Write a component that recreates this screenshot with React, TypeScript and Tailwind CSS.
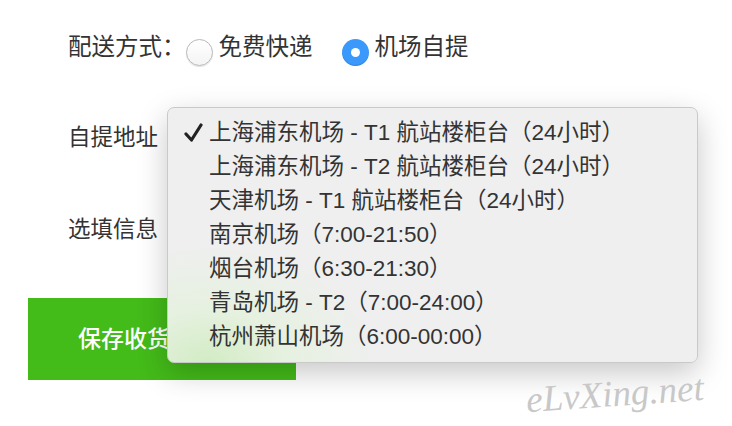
import { useState } from 'react';

const airports = [
  '上海浦东机场 - T1 航站楼柜台（24小时）',
  '上海浦东机场 - T2 航站楼柜台（24小时）',
  '天津机场 - T1 航站楼柜台（24小时）',
  '南京机场（7:00-21:50）',
  '烟台机场（6:30-21:30）',
  '青岛机场 - T2（7:00-24:00）',
  '杭州萧山机场（6:00-00:00）',
];

const Radio = ({ checked, onClick }: { checked: boolean; onClick: () => void }) => (
  <span
    onClick={onClick}
    className={`mt-[6px] flex h-[27px] w-[27px] shrink-0 items-center justify-center rounded-full ${
      checked
        ? 'bg-[#3b99fc] shadow-[inset_0_-1px_1px_rgba(0,0,0,0.15)]'
        : 'border border-[#b8b8b8] bg-gradient-to-b from-white to-[#f4f4f4] shadow-[0_1px_1px_rgba(0,0,0,0.12)]'
    }`}
  >
    {checked && <span className="h-[9px] w-[9px] rounded-full bg-white" />}
  </span>
);

export default function App() {
  const [mode, setMode] = useState('pickup');
  const [selected] = useState(0);

  return (
    <div className="relative h-[426px] w-[732px] overflow-hidden bg-white font-['Liberation_Sans','Noto_Sans_CJK_SC',sans-serif] text-[#333]">
      <div className="flex flex-col pt-[33px]">
        <div className="flex h-[28px] items-start pl-[68px] text-[23.5px] leading-[28px]">
          <span>配送方式：</span>
          <Radio checked={mode === 'express'} onClick={() => setMode('express')} />
          <span className="ml-[6px]">免费快递</span>
          <span className="ml-[29px]">
            <Radio checked={mode === 'pickup'} onClick={() => setMode('pickup')} />
          </span>
          <span className="ml-[6px]">机场自提</span>
        </div>

        <div className="mt-[63px] pl-[68px] text-[22.5px] leading-[28px]">自提地址</div>
        <div className="mt-[64px] pl-[68px] text-[22.5px] leading-[28px]">选填信息</div>

        <button className="ml-[28px] mt-[54px] flex h-[82px] w-[268px] items-center bg-[#43bb19] pl-[50px] text-[23px] font-medium text-white">
          保存收货地址
        </button>
      </div>

      {/* native select popup */}
      <div className="absolute left-[167px] top-[107px] w-[531px] rounded-[7px] border border-[#c9c9c9] bg-[radial-gradient(ellipse_170px_120px_at_40px_255px,#d2ecc4_0%,#e6f1e0_45%,#efefef_100%)] py-[8px] shadow-[0_10px_30px_rgba(0,0,0,0.22)]">
        {airports.map((a, i) => (
          <div key={a} className="flex h-[34px] items-center text-[22.5px] text-[#333]">
            <span className="flex w-[41px] justify-center pl-[10px]">
              {i === selected && (
                <svg width="19" height="20" viewBox="0 0 19 20">
                  <path d="M2 11 L7.5 17 L17 2" fill="none" stroke="#222" strokeWidth="3.2" strokeLinecap="round" strokeLinejoin="round" />
                </svg>
              )}
            </span>
            <span>{a}</span>
          </div>
        ))}
      </div>

      <div className="absolute left-[526px] top-[366px] -rotate-[4deg] font-['Liberation_Serif',serif] text-[37px] italic text-[#c8c8c8]">
        eLvXing.net
      </div>
    </div>
  );
}
